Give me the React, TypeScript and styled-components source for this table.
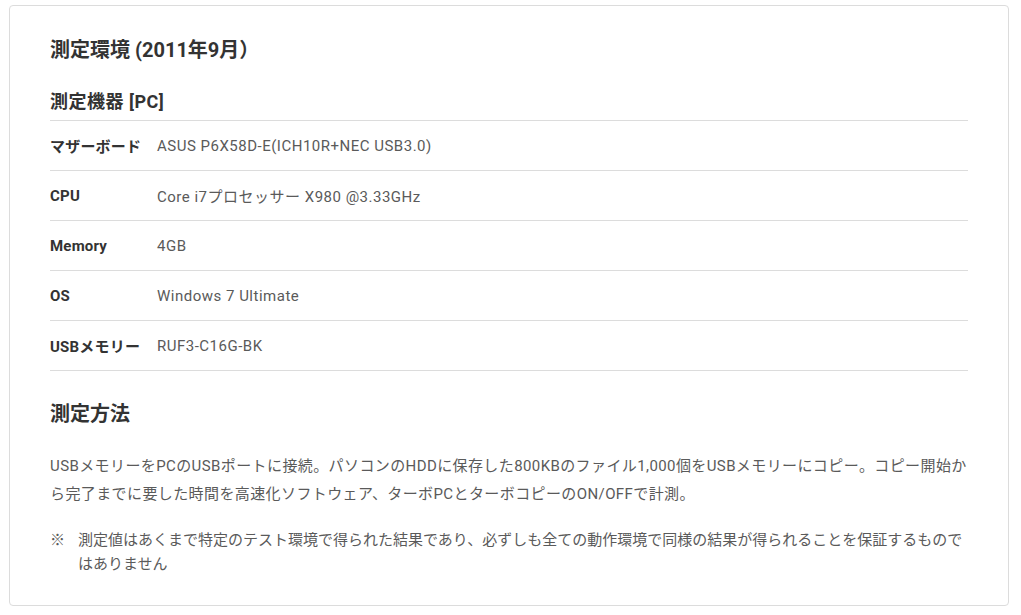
import React from "react";
import styled, { createGlobalStyle } from "styled-components";

const GlobalStyle = createGlobalStyle`
  html, body {
    margin: 0;
    padding: 0;
    background: #fff;
  }
  body {
    font-family: Roboto, "Noto Sans CJK JP", "Noto Sans", sans-serif;
    color: #333;
  }
`;

const Page = styled.div`
  padding: 5px 12px 9px 9px;
`;

const Card = styled.section`
  width: 1000px;
  box-sizing: border-box;
  border: 1px solid #dcdcdc;
  border-radius: 4px;
  padding: 30px 40px 29px 40px;
`;

const Heading = styled.h2<{ $gap?: number }>`
  margin: ${(p) => p.$gap ?? 0}px 0 0;
  font-size: 20px;
  font-weight: 700;
  line-height: 28px;
  color: #333;
`;

const SubTitle = styled.h3`
  margin: 26px 0 0;
  font-size: 18px;
  font-weight: 700;
  line-height: 24px;
  letter-spacing: 0.5px;
  padding-bottom: 6px;
  color: #333;
`;

const SpecTable = styled.dl`
  margin: 0;
  border-top: 1px solid #dcdcdc;
`;

const SpecRow = styled.div`
  display: flex;
  align-items: center;
  height: 49px;
  border-bottom: 1px solid #dcdcdc;
  font-size: 15px;
`;

const SpecLabel = styled.dt`
  width: 107px;
  font-weight: 700;
  letter-spacing: 0.2px;
  color: #333;
`;

const SpecValue = styled.dd`
  margin: 0;
  letter-spacing: 0.5px;
  color: #5a5a5a;
`;

const Paragraph = styled.p`
  margin: 24px 0 0;
  font-size: 15px;
  line-height: 28px;
  letter-spacing: 0.4px;
  color: #5a5a5a;
`;

const Note = styled.p`
  display: flex;
  margin: 20px 0 0;
  font-size: 15px;
  line-height: 24px;
  color: #5a5a5a;
`;

const NoteMark = styled.span`
  flex: 0 0 28px;
`;

const specs: [string, string][] = [
  ["マザーボード", "ASUS P6X58D-E(ICH10R+NEC USB3.0)"],
  ["CPU", "Core i7プロセッサー X980 @3.33GHz"],
  ["Memory", "4GB"],
  ["OS", "Windows 7 Ultimate"],
  ["USBメモリー", "RUF3-C16G-BK"],
];

export default function App() {
  return (
    <>
      <GlobalStyle />
      <Page>
        <Card>
          <Heading>測定環境 (2011年9月）</Heading>
          <SubTitle>測定機器 [PC]</SubTitle>
          <SpecTable>
            {specs.map(([label, value]) => (
              <SpecRow key={label}>
                <SpecLabel>{label}</SpecLabel>
                <SpecValue>{value}</SpecValue>
              </SpecRow>
            ))}
          </SpecTable>
          <Heading $gap={29}>測定方法</Heading>
          <Paragraph>
            USBメモリーをPCのUSBポートに接続。パソコンのHDDに保存した800KBのファイル1,000個をUSBメモリーにコピー。コピー開始から完了までに要した時間を高速化ソフトウェア、ターボPCとターボコピーのON/OFFで計測。
          </Paragraph>
          <Note>
            <NoteMark>※</NoteMark>
            <span>
              測定値はあくまで特定のテスト環境で得られた結果であり、必ずしも全ての動作環境で同様の結果が得られることを保証するものではありません
            </span>
          </Note>
        </Card>
      </Page>
    </>
  );
}
